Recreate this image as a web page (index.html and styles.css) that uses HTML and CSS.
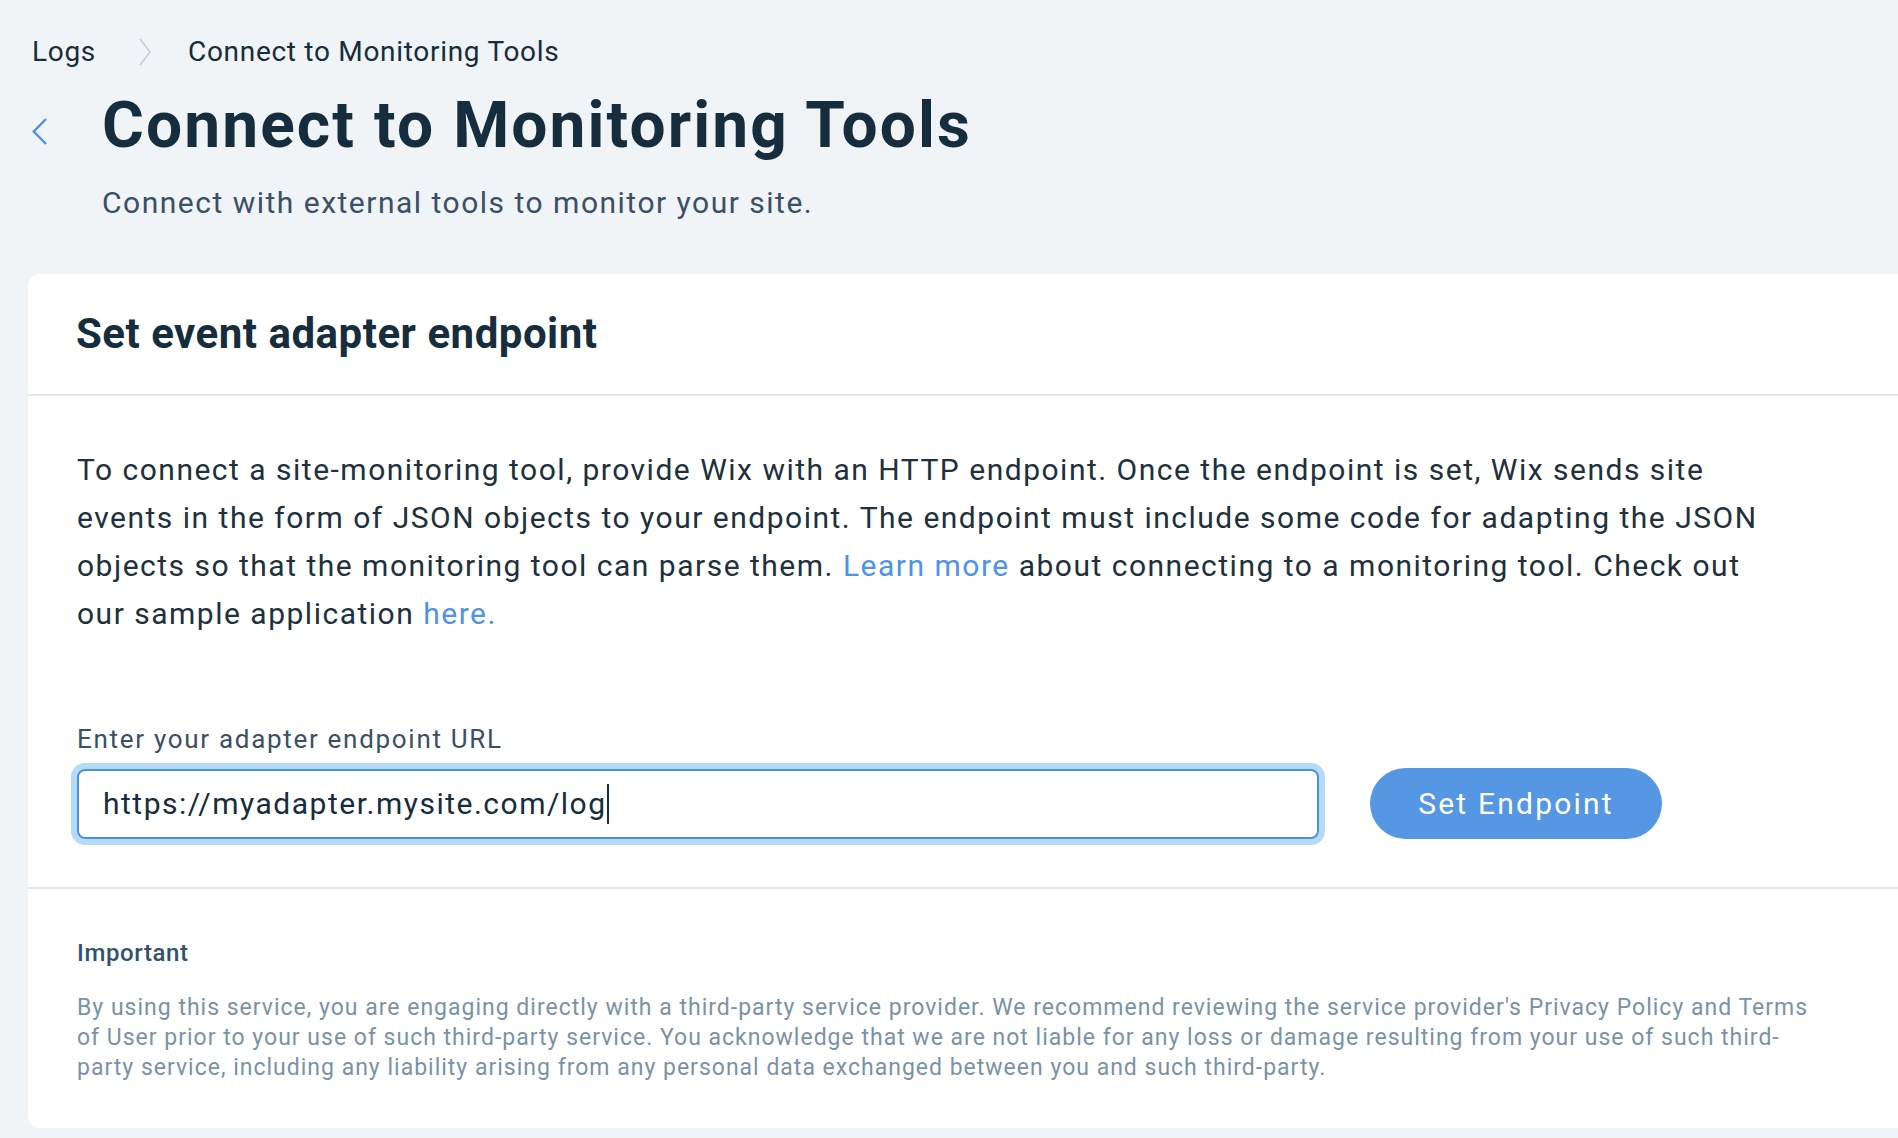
FILE: index.html
```html
<!DOCTYPE html>
<html lang="en">
<head>
<meta charset="utf-8">
<title>Connect to Monitoring Tools</title>
<link rel="stylesheet" href="styles.css">
</head>
<body>
<div class="page">
  <header class="page-head">
    <nav class="crumbs">
      <span class="crumb">Logs</span>
      <svg class="crumb-sep" width="14" height="30" viewBox="0 0 14 30"><polyline points="2,2 12,15 2,28" fill="none" stroke="#c3cdd6" stroke-width="1.6"/></svg>
      <span class="crumb current">Connect to Monitoring Tools</span>
    </nav>
    <div class="title-row">
      <button class="back" aria-label="Back">
        <svg width="18" height="30" viewBox="0 0 18 30"><polyline points="14,2 1.8,14.5 14,27" fill="none" stroke="#4d90e6" stroke-width="2.4"/></svg>
      </button>
      <div class="title-block">
        <h1 class="title">Connect to Monitoring Tools</h1>
        <p class="subtitle">Connect with external tools to monitor your site.</p>
      </div>
    </div>
  </header>

  <section class="card">
    <div class="card-head">
      <h2 class="card-title">Set event adapter endpoint</h2>
    </div>
    <div class="card-body">
      <p class="intro">To connect a site-monitoring tool, provide Wix with an HTTP endpoint. Once the endpoint is set, Wix sends site<br>events in the form of JSON objects to your endpoint. The endpoint must include some code for adapting the JSON<br>objects so that the monitoring tool can parse them. <a class="link" href="#">Learn more</a> about connecting to a monitoring tool. Check out<br>our sample application <a class="link" href="#">here.</a></p>
      <label class="field-label">Enter your adapter endpoint URL</label>
      <div class="field-row">
        <div class="input" role="textbox">https://myadapter.mysite.com/log<span class="caret"></span></div>
        <button class="btn">Set Endpoint</button>
      </div>
    </div>
    <div class="card-foot">
      <h3 class="note-title">Important</h3>
      <p class="note">By using this service, you are engaging directly with a third-party service provider. We recommend reviewing the service provider's Privacy Policy and Terms<br>of User prior to your use of such third-party service. You acknowledge that we are not liable for any loss or damage resulting from your use of such third-<br>party service, including any liability arising from any personal data exchanged between you and such third-party.</p>
    </div>
  </section>
</div>
</body>
</html>
```

FILE: styles.css
```css
* { box-sizing: border-box; }
html, body {
  margin: 0;
  padding: 0;
  background: #f0f4f7;
  overflow: hidden;
}
body {
  font-family: Roboto, "Liberation Sans", sans-serif;
  color: #162d3d;
}
.page {
  display: flex;
  flex-direction: column;
  padding: 34px 0 9px 0;
}
.page-head {
  padding-left: 32px;
  display: flex;
  flex-direction: column;
}
.crumbs {
  display: flex;
  align-items: center;
  height: 36px;
  font-size: 28px;
  line-height: 36px;
  letter-spacing: 0.7px;
  color: #162d3d;
}
.crumb-sep {
  margin: 0 36px 0 42px;
}
.title-row {
  display: flex;
  align-items: flex-start;
  margin-top: 18px;
}
.back {
  background: none;
  border: 0;
  padding: 0;
  margin: 29px 52px 0 0;
  width: 18px;
  height: 30px;
  display: flex;
}
.title {
  margin: 0;
  font-size: 64px;
  line-height: 76px;
  font-weight: 700;
  letter-spacing: 2.1px;
  color: #162d3d;
}
.subtitle {
  margin: 19px 0 0 0;
  font-size: 30px;
  line-height: 40px;
  letter-spacing: 1.5px;
  color: #3b4f66;
}
.card {
  margin: 51px 0 0 28px;
  background: #fff;
  border-radius: 12px 0 0 12px;
  display: flex;
  flex-direction: column;
}
.card-head {
  padding: 33px 48px 33px 48px;
  border-bottom: 2px solid #e1e7ec;
}
.card-title {
  margin: 0;
  font-size: 42px;
  line-height: 54px;
  font-weight: 700;
  letter-spacing: 0.5px;
  color: #162d3d;
}
.card-body {
  padding: 50px 48px 48px 49px;
  border-bottom: 2px solid #e1e7ec;
  display: flex;
  flex-direction: column;
}
.intro {
  margin: 0;
  font-size: 30px;
  line-height: 48px;
  letter-spacing: 1.5px;
  color: #20303c;
  white-space: nowrap;
}
.link {
  color: #4d93e8;
  text-decoration: none;
}
.field-label {
  margin-top: 84px;
  font-size: 26px;
  line-height: 34px;
  letter-spacing: 1.7px;
  color: #3b4f66;
}
.field-row {
  display: flex;
  align-items: center;
  gap: 51px;
  margin-top: 12px;
}
.input {
  width: 1242px;
  height: 70px;
  border: 2px solid #4a8fe0;
  border-radius: 8px;
  box-shadow: 0 0 0 6px #b6dbf9;
  padding: 0 24px;
  display: flex;
  align-items: center;
  font-size: 30px;
  letter-spacing: 1.5px;
  color: #162d3d;
}
.caret {
  display: inline-block;
  width: 2px;
  height: 40px;
  background: #162d3d;
  margin-left: 0;
}
.btn {
  width: 292px;
  height: 71px;
  border: 0;
  border-radius: 36px;
  background: #5597e3;
  color: #fff;
  font-family: Roboto, "Liberation Sans", sans-serif;
  font-size: 30px;
  letter-spacing: 2.2px;
  padding: 0;
}
.card-foot {
  padding: 48px 48px 45px 49px;
}
.note-title {
  margin: 0;
  font-size: 24px;
  line-height: 32px;
  font-weight: 500;
  letter-spacing: 0.6px;
  color: #32536a;
}
.note {
  margin: 24px 0 0 0;
  font-size: 23px;
  line-height: 30px;
  letter-spacing: 1px;
  color: #7a92a5;
  white-space: nowrap;
}
```
